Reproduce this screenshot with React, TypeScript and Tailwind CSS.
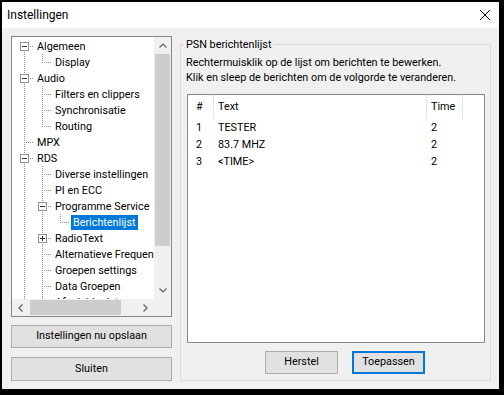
import React from 'react';

type Item = { label: string; level: number; exp?: 'minus' | 'plus'; selected?: boolean };

const items: Item[] = [
  { label: 'Algemeen', level: 0, exp: 'minus' },
  { label: 'Display', level: 1 },
  { label: 'Audio', level: 0, exp: 'minus' },
  { label: 'Filters en clippers', level: 1 },
  { label: 'Synchronisatie', level: 1 },
  { label: 'Routing', level: 1 },
  { label: 'MPX', level: 0 },
  { label: 'RDS', level: 0, exp: 'minus' },
  { label: 'Diverse instellingen', level: 1 },
  { label: 'PI en ECC', level: 1 },
  { label: 'Programme Service', level: 1, exp: 'minus' },
  { label: 'Berichtenlijst', level: 2, selected: true },
  { label: 'RadioText', level: 1, exp: 'plus' },
  { label: 'Alternatieve Frequenties', level: 1 },
  { label: 'Groepen settings', level: 1 },
  { label: 'Data Groepen', level: 1 },
  { label: 'Afgeleide data', level: 1 },
];

function hasNext(i: number): boolean {
  const L = items[i].level;
  for (let j = i + 1; j < items.length; j++) {
    if (items[j].level < L) return false;
    if (items[j].level === L) return true;
  }
  return true;
}

function ancestorContinues(i: number, a: number): boolean {
  for (let j = i - 1; j >= 0; j--) {
    if (items[j].level === a) return hasNext(j);
    if (items[j].level < a) return false;
  }
  return false;
}

const DOT = '#8f8f8f';

function TreeRow({ item, i }: { item: Item; i: number }) {
  const L = item.level;
  const w = 23 + 18 * L;
  const x = 12 + 18 * L;
  const verts: React.ReactNode[] = [];
  for (let a = 0; a < L; a++) {
    if (ancestorContinues(i, a)) {
      const ax = 12 + 18 * a;
      verts.push(
        <line key={a} x1={ax + 0.5} y1={0} x2={ax + 0.5} y2={16} stroke={DOT} strokeDasharray="1 1" />
      );
    }
  }
  const y0 = i === 0 ? 8 : 0;
  const y1 = hasNext(i) ? 16 : 9;
  return (
    <div className="flex items-center h-[16px] whitespace-nowrap">
      <svg width={w} height={16} className="shrink-0" shapeRendering="crispEdges">
        {verts}
        <line x1={x + 0.5} y1={y0} x2={x + 0.5} y2={y1} stroke={DOT} strokeDasharray="1 1" />
        <line x1={x} y1={8.5} x2={w - 1} y2={8.5} stroke={DOT} strokeDasharray="1 1" />
        {item.exp && (
          <g>
            <rect x={x - 4 + 0.5} y={4 + 0.5} width={8} height={8} fill="#fff" stroke="#919191" />
            <rect x={x - 2} y={8} width={5} height={1} fill="#333" />
            {item.exp === 'plus' && <rect x={x} y={6} width={1} height={5} fill="#333" />}
          </g>
        )}
      </svg>
      <span
        className={
          item.selected
            ? 'h-[15px] leading-[15px] px-[2px] bg-[#0078d7] text-white'
            : 'h-[15px] leading-[15px] px-[2px]'
        }
      >
        {item.label}
      </span>
    </div>
  );
}

function Chevron({ dir }: { dir: 'up' | 'down' | 'left' | 'right' }) {
  const pts =
    dir === 'up'
      ? '0.5,4.5 4,1 7.5,4.5'
      : dir === 'down'
      ? '0.5,0.5 4,4 7.5,0.5'
      : dir === 'left'
      ? '4.5,0.5 1,4 4.5,7.5'
      : '0.5,0.5 4,4 0.5,7.5';
  const vertical = dir === 'up' || dir === 'down';
  return (
    <svg width={vertical ? 8 : 5} height={vertical ? 5 : 8}>
      <polyline points={pts} fill="none" stroke="#606060" strokeWidth={1.2} />
    </svg>
  );
}

export default function App() {
  return (
    <div className="w-[504px] h-[395px] bg-black pt-[2px] pl-[2px] font-['Roboto',sans-serif] text-[10.8px] text-black overflow-hidden">
      <div className="w-[497px] h-[387px] bg-[#f0f0f0] flex flex-col">
        {/* Title bar */}
        <div className="h-[26px] bg-white flex items-center justify-between pl-[5px] pr-[9px] shrink-0">
          <span className="text-[12px] text-black">Instellingen</span>
          <svg width={10} height={10}>
            <line x1={0} y1={0} x2={10} y2={10} stroke="#000" strokeWidth={1} />
            <line x1={10} y1={0} x2={0} y2={10} stroke="#000" strokeWidth={1} />
          </svg>
        </div>

        <div className="flex pl-[9px] pt-[8px]">
          {/* Left column */}
          <div className="w-[161px] flex flex-col">
            <div className="h-[281px] border border-[#828790] bg-white flex flex-col">
              <div className="flex h-[262px]">
                <div className="w-[142px] overflow-hidden pt-[1px]">
                  {items.map((it, i) => (
                    <TreeRow key={i} item={it} i={i} />
                  ))}
                </div>
                <div className="w-[17px] bg-[#f0f0f0] flex flex-col">
                  <div className="h-[17px] flex items-center justify-center">
                    <Chevron dir="up" />
                  </div>
                  <div className="flex-1 flex flex-col">
                    <div className="h-[192px] mx-[1px] bg-[#cdcdcd]" />
                  </div>
                  <div className="h-[17px] flex items-center justify-center">
                    <Chevron dir="down" />
                  </div>
                </div>
              </div>
              <div className="flex h-[17px]">
                <div className="w-[142px] bg-[#f0f0f0] flex">
                  <div className="w-[17px] flex items-center justify-center">
                    <Chevron dir="left" />
                  </div>
                  <div className="ml-[1px] w-[91px] my-[1px] bg-[#cdcdcd]" />
                  <div className="ml-auto w-[17px] flex items-center justify-center">
                    <Chevron dir="right" />
                  </div>
                </div>
                <div className="w-[17px] bg-[#f0f0f0]" />
              </div>
            </div>
            <button className="mt-[8px] h-[23px] border border-[#adadad] bg-[#e1e1e1] flex items-center justify-center">
              Instellingen nu opslaan
            </button>
            <button className="mt-[9px] h-[24px] border border-[#adadad] bg-[#e1e1e1] flex items-center justify-center">
              Sluiten
            </button>
          </div>

          {/* Right group box */}
          <fieldset className="ml-[8px] mt-[1px] w-[311px] border border-[#dcdcdc] pl-[5px] pr-[5px] pb-[6px]">
            <legend className="-ml-[2px] px-[2px] leading-[15px]">PSN berichtenlijst</legend>
            <div className="mt-[3px] leading-[15px]">
              <div>Rechtermuisklik op de lijst om berichten te bewerken.</div>
              <div>Klik en sleep de berichten om de volgorde te veranderen.</div>
            </div>
            <div className="mt-[9px] ml-[1px] w-[298px] h-[249px] border border-[#828790] bg-white">
              <div className="flex h-[25px] items-center">
                <div className="w-[26px] h-full border-r border-[#e5e5e5] pl-[8px] flex items-center">#</div>
                <div className="w-[213px] h-full border-r border-[#e5e5e5] pl-[4px] flex items-center">Text</div>
                <div className="w-[36px] h-full border-r border-[#e5e5e5] pl-[4px] flex items-center">Time</div>
              </div>
              {[
                ['1', 'TESTER', '2'],
                ['2', '83.7 MHZ', '2'],
                ['3', '<TIME>', '2'],
              ].map((r, i) => (
                <div key={i} className="flex h-[17px] items-center">
                  <div className="w-[26px] pl-[8px]">{r[0]}</div>
                  <div className="w-[213px] pl-[4px]">{r[1]}</div>
                  <div className="w-[36px] pl-[4px]">{r[2]}</div>
                </div>
              ))}
            </div>
            <div className="mt-[8px] flex pl-[79px] gap-[14px]">
              <button className="w-[73px] h-[23px] border border-[#adadad] bg-[#e1e1e1] flex items-center justify-center">
                Herstel
              </button>
              <button className="w-[73px] h-[23px] border-2 border-[#0078d7] bg-[#e1e1e1] flex items-center justify-center">
                Toepassen
              </button>
            </div>
          </fieldset>
        </div>
      </div>
    </div>
  );
}
